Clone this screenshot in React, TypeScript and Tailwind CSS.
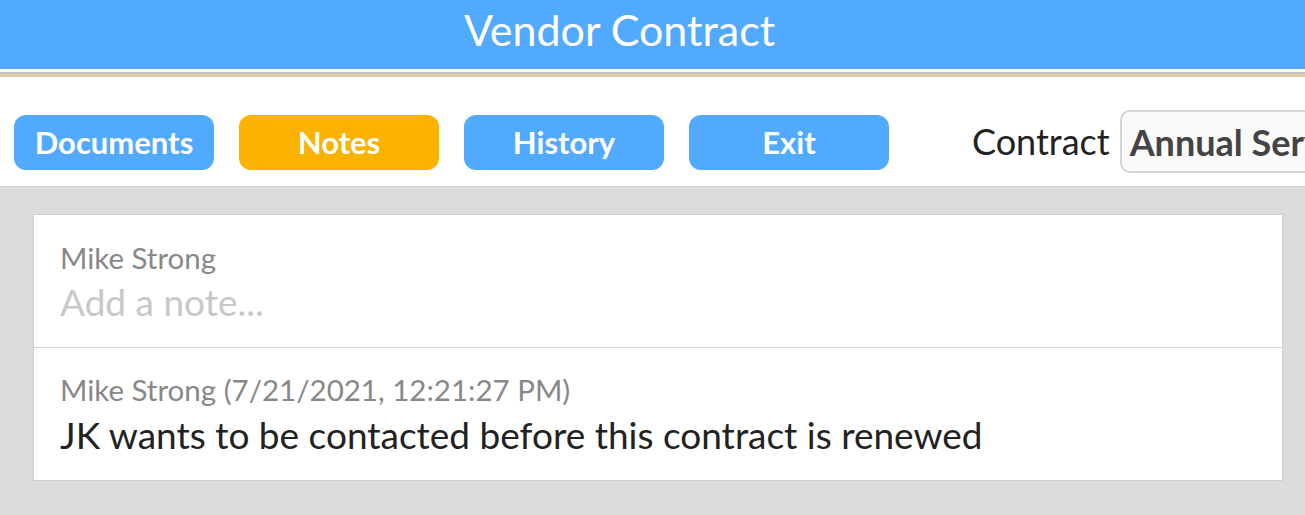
import React, { useState } from 'react';

const font = { fontFamily: 'Lato, "Noto Sans", sans-serif' };

const TabButton: React.FC<{ label: string; active?: boolean }> = ({ label, active = false }) => (
  <button
    className={`w-[200px] h-[55px] rounded-[12px] text-white font-bold text-[31px] leading-none ${active ? 'bg-[#fbb200]' : 'bg-[#52aaff]'}`}
  >
    {label}
  </button>
);

export default function App() {
  const [note, setNote] = useState('');

  return (
    <div className="w-[1305px] h-[515px] overflow-hidden bg-[#dcdcdc]" style={font}>
      <div className="h-[69px] bg-[#52aaff] flex items-center justify-center pb-[10px] pr-[66px]">
        <h1 className="text-white text-[43px] leading-none">Vendor Contract</h1>
      </div>
      <div className="h-[3px] bg-white" />
      <div className="h-[2px] bg-[#c4c4c4]" />
      <div className="h-[3px] bg-[#e3cc9c]" />

      <div className="h-[110px] bg-white border-b border-[#cfcfcf] flex items-start pt-[33px] pl-[14px] whitespace-nowrap overflow-hidden">
        <div className="flex gap-[25px] shrink-0 mt-[5px]">
          <TabButton label="Documents" />
          <TabButton label="Notes" active />
          <TabButton label="History" />
          <TabButton label="Exit" />
        </div>
        <span className="ml-[83px] text-[36px] leading-[63px] text-[#222] shrink-0">Contract</span>
        <div className="ml-[10px] h-[63px] w-[260px] shrink-0 border-2 border-[#d4d4d4] rounded-[10px] bg-[#fafafa] flex items-center px-[8px] overflow-hidden">
          <span className="text-[36px] font-bold text-[#444]">Annual Service Agreement</span>
        </div>
      </div>

      <div className="pl-[33px] pr-[22px] pt-[27px]">
        <div className="bg-white border border-[#cfcfcf]">
          <div className="px-[26px] pt-[23px] pb-[21px] border-b border-[#d6d6d6]">
            <div className="text-[29.5px] text-[#888] leading-[40px]">Mike Strong</div>
            <input
              value={note}
              onChange={e => setNote(e.target.value)}
              placeholder="Add a note..."
              className="w-full h-[48px] text-[37px] leading-[48px] text-[#222] placeholder:text-[#c8c8c8] outline-none bg-transparent"
            />
          </div>
          <div className="px-[26px] pt-[22px] pb-[20px]">
            <div className="text-[29.5px] text-[#888] leading-[40px]">Mike Strong (7/21/2021, 12:21:27 PM)</div>
            <div className="text-[37px] text-[#222] leading-[50px]">JK wants to be contacted before this contract is renewed</div>
          </div>
        </div>
      </div>
    </div>
  );
}
